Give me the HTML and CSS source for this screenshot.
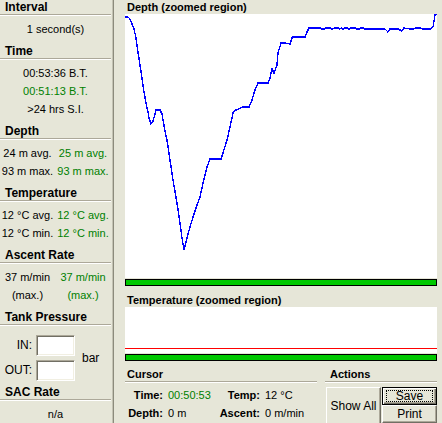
FILE: index.html
```html
<!DOCTYPE html>
<html>
<head>
<meta charset="utf-8">
<link rel="stylesheet" href="styles.css">
</head>
<body>
<div class="left">
  <section class="sec">
    <h2 class="hd">Interval</h2>
    <div class="body"><div class="row c">1 second(s)</div></div>
  </section>
  <section class="sec">
    <h2 class="hd">Time</h2>
    <div class="body">
      <div class="row c">00:53:36 B.T.</div>
      <div class="row c g">00:51:13 B.T.</div>
      <div class="row c">&gt;24 hrs S.I.</div>
    </div>
  </section>
  <section class="sec">
    <h2 class="hd">Depth</h2>
    <div class="body pair">
      <div class="row">24 m avg.</div><div class="row g">25 m avg.</div>
      <div class="row">93 m max.</div><div class="row g">93 m max.</div>
    </div>
  </section>
  <section class="sec">
    <h2 class="hd">Temperature</h2>
    <div class="body pair">
      <div class="row">12 °C avg.</div><div class="row g">12 °C avg.</div>
      <div class="row">12 °C min.</div><div class="row g">12 °C min.</div>
    </div>
  </section>
  <section class="sec">
    <h2 class="hd">Ascent Rate</h2>
    <div class="body pair">
      <div class="row">37 m/min</div><div class="row g">37 m/min</div>
      <div class="row">(max.)</div><div class="row g">(max.)</div>
    </div>
  </section>
  <section class="sec tank">
    <h2 class="hd">Tank Pressure</h2>
    <div class="body tankgrid">
      <span class="lbl">IN:</span><span class="inp"></span>
      <span class="unit">bar</span>
      <span class="lbl">OUT:</span><span class="inp"></span>
    </div>
  </section>
  <section class="sec">
    <h2 class="hd">SAC Rate</h2>
    <div class="body"><div class="row c">n/a</div></div>
  </section>
</div>
<div class="sep"></div>
<div class="right">
  <div class="gtitle">Depth (zoomed region)</div>
  <div class="plot depth">
    <svg width="312" height="264" viewBox="125 14 312 264">
      <polyline fill="none" stroke="#0000ff" stroke-width="1.4" shape-rendering="crispEdges"
        points="125,17 128,17 130,19 132,24 134,29 136,38 138,52 140,65 142,78 144,92 146,103 148,112 149,118 151,124 153,121 155,114 156,110 160,110 162,114 163,120 165,131 167,140 170,160 173,180 177,203 180,223 182,238 184,250 187,238 190,227 193,217 197,205 200,197 203,183 207,167 210,159 221,159 223,153 227,140 230,127 233,113 236,110 243,107 249,107 252,100 255,90 258,83 268,83 270,78 272,69 274,73 277,65 278,53 281,43 285,43 290,44 292,38 293,37 305,37 307,32 309,28 320,28 322,29 324,29 326,28 330,28 332,29 335,28 338,28 340,29 341,28 343,29 345,28 347,28 349,29 351,28 353,28 355,28 357,29 359,29 361,28 363,28 365,29 368,29 372,29 376,29 380,29 385,29 387,31 388,32 390,29 398,29 400,30 402,31 404,28 410,29 413,29 416,28 420,28 423,29 430,29 432,28 433,27 434,21 435,15 437,14"/>
    </svg>
  </div>
  <div class="bar"></div>
  <div class="gtitle t2">Temperature (zoomed region)</div>
  <div class="plot temp"><div class="redline"></div></div>
  <div class="bar"></div>
  <div class="bottom">
    <section class="cursor">
      <h2 class="hd2">Cursor</h2>
      <div class="cgrid">
        <span class="k">Time:</span><span class="g">00:50:53</span>
        <span class="k">Temp:</span><span>12 °C</span>
        <span class="k">Depth:</span><span>0 m</span>
        <span class="k">Ascent:</span><span>0 m/min</span>
      </div>
    </section>
    <section class="actions">
      <h2 class="hd2 pad">Actions</h2>
      <div class="btns">
        <button class="btn showall">Show All</button>
        <div class="stack">
          <button class="btn def"><span class="focus">Save</span></button>
          <button class="btn">Print</button>
        </div>
      </div>
    </section>
  </div>
</div>
</body>
</html>
```
FILE: styles.css
```css
* { box-sizing: border-box; }
html, body { margin: 0; padding: 0; }
body {
  width: 442px;
  height: 423px;
  overflow: hidden;
  background: #e6e6d8;
  font-family: "Liberation Sans", Arial, sans-serif;
  font-size: 11px;
  color: #000;
  display: flex;
  align-items: flex-start;
}
h2 { margin: 0; font-size: inherit; }

.left {
  width: 111px;
  margin-right: 1px;
  flex: none;
}
.sec { margin-bottom: 6px; }
.hd {
  height: 15px;
  line-height: 14px;
  font-size: 12px;
  font-weight: bold;
  padding-left: 5px;
  border-bottom: 1px solid #aca899;
  box-shadow: 0 1px 0 #fff;
}
.body { padding-top: 5px; }
.row { height: 18px; line-height: 18px; white-space: nowrap; }
.c { text-align: center; }
.g { color: #008000; }
.pair {
  display: grid;
  grid-template-columns: 55px 56px;
}
.pair .row { text-align: center; }

.tank { margin-bottom: 4px; }
.tankgrid {
  padding-top: 10px;
  display: grid;
  grid-template-columns: 32px 39px auto;
  grid-auto-rows: 21px;
  column-gap: 4px;
  row-gap: 4px;
}
.lbl { text-align: right; line-height: 21px; font-size: 12px; }
.unit { grid-column: 3; grid-row: 1 / 3; align-self: center; padding-left: 3px; font-size: 12px; }
.inp {
  background: #fff;
  border: 1px solid;
  border-color: #aca899 #fff #fff #aca899;
  box-shadow: inset 1px 1px 0 #716f64, inset -1px -1px 0 #f1efe2;
}

.sep {
  flex: none;
  width: 2px;
  height: 423px;
  border-left: 1px solid #c4c3b4;
  border-right: 1px solid #8c8b7c;
}

.right {
  flex: none;
  width: 328px;
  padding: 0 5px 0 11px;
}
.gtitle {
  height: 14px;
  line-height: 14px;
  font-weight: bold;
  padding-left: 2px;
  white-space: nowrap;
}
.gtitle.t2 { height: 21px; padding-top: 7px; }
.plot { background: #fff; width: 312px; }
.plot svg { display: block; }
.depth { height: 264px; }
.temp { height: 46px; padding-top: 41px; }
.redline { height: 1px; background: #ff0000; }
.bar {
  margin-top: 1px;
  height: 7px;
  border: 1px solid #000;
  background: #00c800;
}

.bottom { display: flex; gap: 8px; }
.cursor { width: 192px; }
.actions { width: 112px; }
.hd2 {
  height: 21px;
  padding-top: 6px;
  line-height: 14px;
  font-weight: bold;
  padding-left: 2px;
  border-bottom: 1px solid #aca899;
  box-shadow: 0 1px 0 #fff;
}
.hd2.pad { padding-left: 5px; }
.cgrid {
  padding-top: 4px;
  padding-left: 2px;
  display: grid;
  grid-template-columns: 36px 46px 41px auto;
  column-gap: 5px;
  grid-auto-rows: 18px;
  line-height: 18px;
  white-space: nowrap;
}
.k { font-weight: bold; text-align: right; }

.btns { display: flex; gap: 1px; padding-top: 5px; padding-left: 1px; }
.stack { display: flex; flex-direction: column; }
.btn {
  font-family: "Liberation Sans", Arial, sans-serif;
  font-size: 12px;
  color: #000;
  background: #e6e6d8;
  border: 1px solid;
  border-color: #fff #716f64 #716f64 #fff;
  box-shadow: inset -1px -1px 0 #aca899;
  padding: 0;
  margin: 0;
}
.showall { width: 55px; height: 38px; }
.stack .btn { width: 55px; height: 18px; line-height: 14px; }
.btn.def {
  border: 1px solid #000;
  box-shadow: inset 1px 1px 0 #fff, inset -1px -1px 0 #716f64, inset -2px -2px 0 #aca899;
  display: flex;
  align-items: center;
  justify-content: center;
}
.focus {
  display: block;
  width: 47px;
  height: 12px;
  line-height: 10px;
  border: 1px dotted #000;
}
```
